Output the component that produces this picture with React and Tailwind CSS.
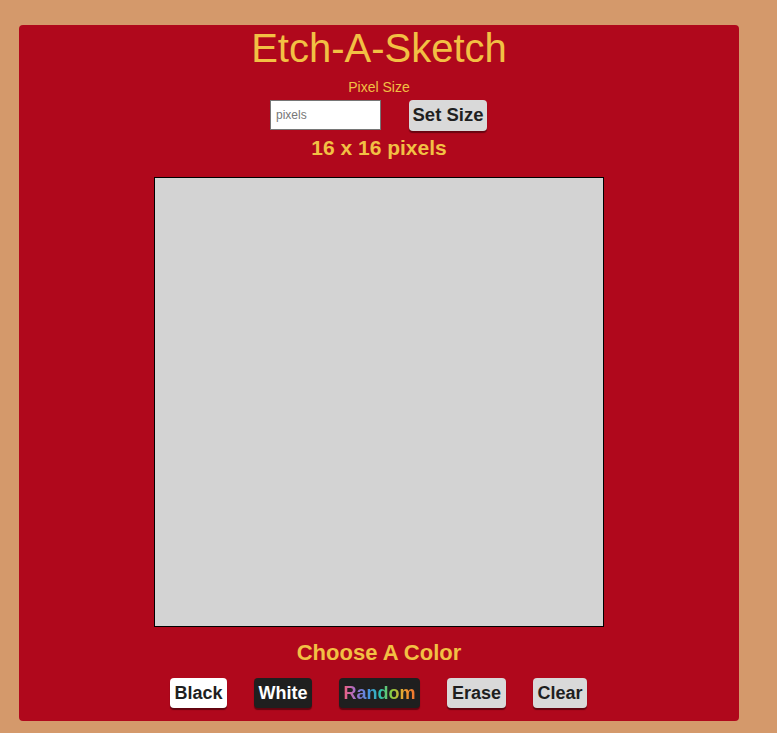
export default function App() {
  const btn =
    "h-[30px] px-[4px] rounded-[4px] text-[18px] font-bold leading-none shadow-[0_2px_1px_rgba(0,0,0,0.45)]";
  return (
    <div
      className="min-h-screen w-full bg-[#d4996b] pt-[25px] pb-[12px]"
      style={{ fontFamily: '"Liberation Sans", Arial, sans-serif' }}
    >
      <div className="ml-[19px] w-[720px] h-[696px] rounded-[4px] bg-[#b0081c] flex flex-col items-center text-[#f2c044]">
        <h1 className="text-[40px] leading-[46px] font-normal">Etch-A-Sketch</h1>
        <div className="mt-[8px] text-[14px] leading-[16px]">Pixel Size</div>
        <div className="mt-[5px] flex items-start gap-[28px] pr-[1px]">
          <input
            placeholder="pixels"
            className="w-[111px] h-[30px] bg-white border border-[#767676] px-[5px] text-[12px] text-black placeholder:text-[#777] outline-none"
          />
          <button className="h-[31px] w-[78px] rounded-[4px] bg-[#d9d9d9] text-[#1f1f1f] text-[18.5px] font-bold leading-none shadow-[0_2px_1px_rgba(0,0,0,0.4)]">
            Set Size
          </button>
        </div>
        <div className="mt-[5px] text-[21px] leading-[24px] font-bold">16 x 16 pixels</div>
        <div className="mt-[17px] w-[450px] h-[450px] border border-black bg-[#d3d3d3]" />
        <div className="mt-[13px] text-[22px] leading-[25px] font-bold">Choose A Color</div>
        <div className="mt-[13px] flex items-start gap-[27px] pr-[1px]">
          <button className={`${btn} bg-white text-[#1f1f1f] w-[57px]`}>Black</button>
          <button className={`${btn} bg-[#1f1f1f] text-white w-[58px]`}>White</button>
          <button className={`${btn} bg-[#1f1f1f] w-[81px]`}>
            <span className="bg-[linear-gradient(90deg,#f06080,#a070d0,#4a90e0,#2cc0b0,#90d040,#f0a030,#f07030)] bg-clip-text text-transparent">
              Random
            </span>
          </button>
          <button className={`${btn} bg-[#d9d9d9] text-[#1f1f1f] w-[59px]`}>Erase</button>
          <button className={`${btn} bg-[#d9d9d9] text-[#1f1f1f] w-[54px]`}>Clear</button>
        </div>
      </div>
    </div>
  );
}
